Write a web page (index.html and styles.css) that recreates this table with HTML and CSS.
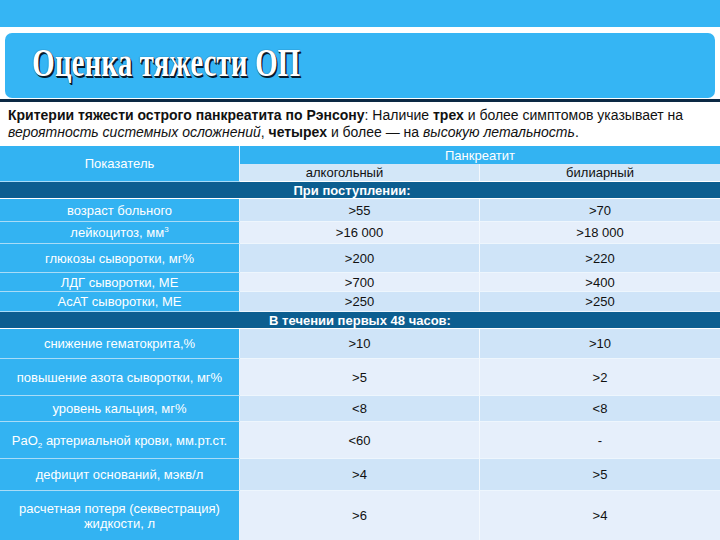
FILE: index.html
```html
<!DOCTYPE html>
<html lang="ru">
<head>
<meta charset="utf-8">
<title>Оценка тяжести ОП</title>
<link rel="stylesheet" href="styles.css">
</head>
<body>
<div class="topband"></div>
<div class="titlebox"><h1 class="title">Оценка тяжести ОП</h1></div>
<div class="rule"></div>
<p class="intro"><b>Критерии тяжести острого панкреатита по Рэнсону</b>: Наличие <b>трех</b> и более симптомов указывает на <i>вероятность системных осложнений</i>, <b>четырех</b> и более — на <i>высокую летальность</i>.</p>
<table class="grid">
  <colgroup><col class="c1"><col class="c2"><col class="c3"></colgroup>
  <tr class="h1">
    <th class="lab" rowspan="2">Показатель</th>
    <th class="panc" colspan="2">Панкреатит</th>
  </tr>
  <tr class="h2">
    <td class="sub alc">алкогольный</td>
    <td class="sub">билиарный</td>
  </tr>
  <tr class="sec"><td colspan="3" class="first">При поступлении:</td></tr>
  <tr class="r1"><th class="lab">возраст больного</th><td class="v a">&gt;55</td><td class="v a">&gt;70</td></tr>
  <tr class="r2"><th class="lab">лейкоцитоз, мм<sup>3</sup></th><td class="v b">&gt;16 000</td><td class="v b">&gt;18 000</td></tr>
  <tr class="r3"><th class="lab">глюкозы сыворотки, мг%</th><td class="v a">&gt;200</td><td class="v a">&gt;220</td></tr>
  <tr class="r4"><th class="lab">ЛДГ сыворотки, МЕ</th><td class="v b">&gt;700</td><td class="v b">&gt;400</td></tr>
  <tr class="r5"><th class="lab">АсАТ сыворотки, МЕ</th><td class="v a">&gt;250</td><td class="v a">&gt;250</td></tr>
  <tr class="sec"><td colspan="3">В течении первых 48 часов:</td></tr>
  <tr class="r6"><th class="lab">снижение гематокрита,%</th><td class="v a">&gt;10</td><td class="v a">&gt;10</td></tr>
  <tr class="r7"><th class="lab">повышение азота сыворотки, мг%</th><td class="v b">&gt;5</td><td class="v b">&gt;2</td></tr>
  <tr class="r8"><th class="lab">уровень кальция, мг%</th><td class="v a">&lt;8</td><td class="v a">&lt;8</td></tr>
  <tr class="r9"><th class="lab">PaO<sub>2</sub> артериальной крови, мм.рт.ст.</th><td class="v b">&lt;60</td><td class="v b">-</td></tr>
  <tr class="r10"><th class="lab">дефицит оснований, мэкв/л</th><td class="v a">&gt;4</td><td class="v a">&gt;5</td></tr>
  <tr class="r11"><th class="lab">расчетная потеря (секвестрация)<br>жидкости, л</th><td class="v b">&gt;6</td><td class="v b">&gt;4</td></tr>
</table>
</body>
</html>
```

FILE: styles.css
```css
html, body {
  margin: 0;
  padding: 0;
  background: #ffffff;
  width: 720px;
  height: 540px;
  overflow: hidden;
}
body {
  font-family: "Liberation Sans", Arial, sans-serif;
  color: #111;
}
.topband {
  height: 27px;
  background: #35b5f4;
}
.titlebox {
  margin: 6px 5px 0 5px;
  height: 65px;
  border-radius: 7px;
  background: #35b5f4;
  display: flex;
  align-items: center;
  padding-left: 27px;
  padding-bottom: 6px;
  box-sizing: border-box;
}
.title {
  margin: 0;
  font-family: "Liberation Serif", "Times New Roman", serif;
  font-weight: bold;
  font-size: 40px;
  line-height: 1;
  color: #ffffff;
  display: inline-block;
  white-space: nowrap;
  transform: scaleX(0.73);
  transform-origin: left center;
  text-shadow: 2px 2px 0 #071c2e, 1px 1px 0 #071c2e, 0 0 1px #0a2a44;
}
.rule {
  margin-top: 1px;
  height: 3px;
  background: #0c2944;
}
.intro {
  margin: 0;
  padding: 5px 8px 0 8px;
  height: 38px;
  box-sizing: border-box;
  font-size: 14px;
  line-height: 17px;
  color: #111;
}
.grid {
  margin-top: 6px;
  width: 720px;
  border-collapse: separate;
  border-spacing: 0;
  table-layout: fixed;
  font-size: 13px;
}
.c1 { width: 240px; }
.c2 { width: 240px; }
.c3 { width: 240px; }
.grid th, .grid td {
  padding: 0;
  text-align: center;
  vertical-align: middle;
  box-sizing: border-box;
}
.lab {
  background: #33b3f2;
  color: #ffffff;
  font-weight: normal;
  font-size: 13px;
  line-height: 15px;
  border-bottom: 1px solid #a9dcf7;
  border-right: 1px solid #e6f3fb;
}
.panc {
  background: #33b3f2;
  color: #ffffff;
  font-weight: normal;
  font-size: 13px;
}
.sub {
  background: #d3e7f8;
  color: #111;
  font-size: 13px;
  border-bottom: 1px solid #ffffff;
}
.sub.alc {
  padding-right: 30px !important;
  border-right: 1px solid #f3f8fd;
}
.sec td {
  background: #0c5e90;
  color: #ffffff;
  font-weight: bold;
  font-size: 13px;
  height: 17px;
  border-bottom: 1px solid #ffffff;
}
.sec td.first { padding-right: 16px; }
.v {
  font-size: 13px;
  color: #111;
  border-bottom: 1px solid #eef6fd;
}
.v.a { background: #cfe4f8; }
.v.b { background: #e6effb; }
.grid tr > td.v:nth-child(2) { border-right: 1px solid #f4f9fe; }
sup { font-size: 8px; vertical-align: 5px; line-height: 0; }
sub { font-size: 8px; vertical-align: -3px; line-height: 0; }
.h1 th, .h1 td { height: 18px; }
.h2 td { height: 18px; }
.r1 > * { height: 23px; }
.r2 > * { height: 22px; }
.r3 > * { height: 29px; }
.r4 > * { height: 19px; }
.r5 > * { height: 20px; }
.r6 > * { height: 30px; }
.r7 > * { height: 37px; }
.r8 > * { height: 26px; }
.r9 > * { height: 37px; }
.r10 > * { height: 32px; }
.r11 > * { height: 50px; }
```
